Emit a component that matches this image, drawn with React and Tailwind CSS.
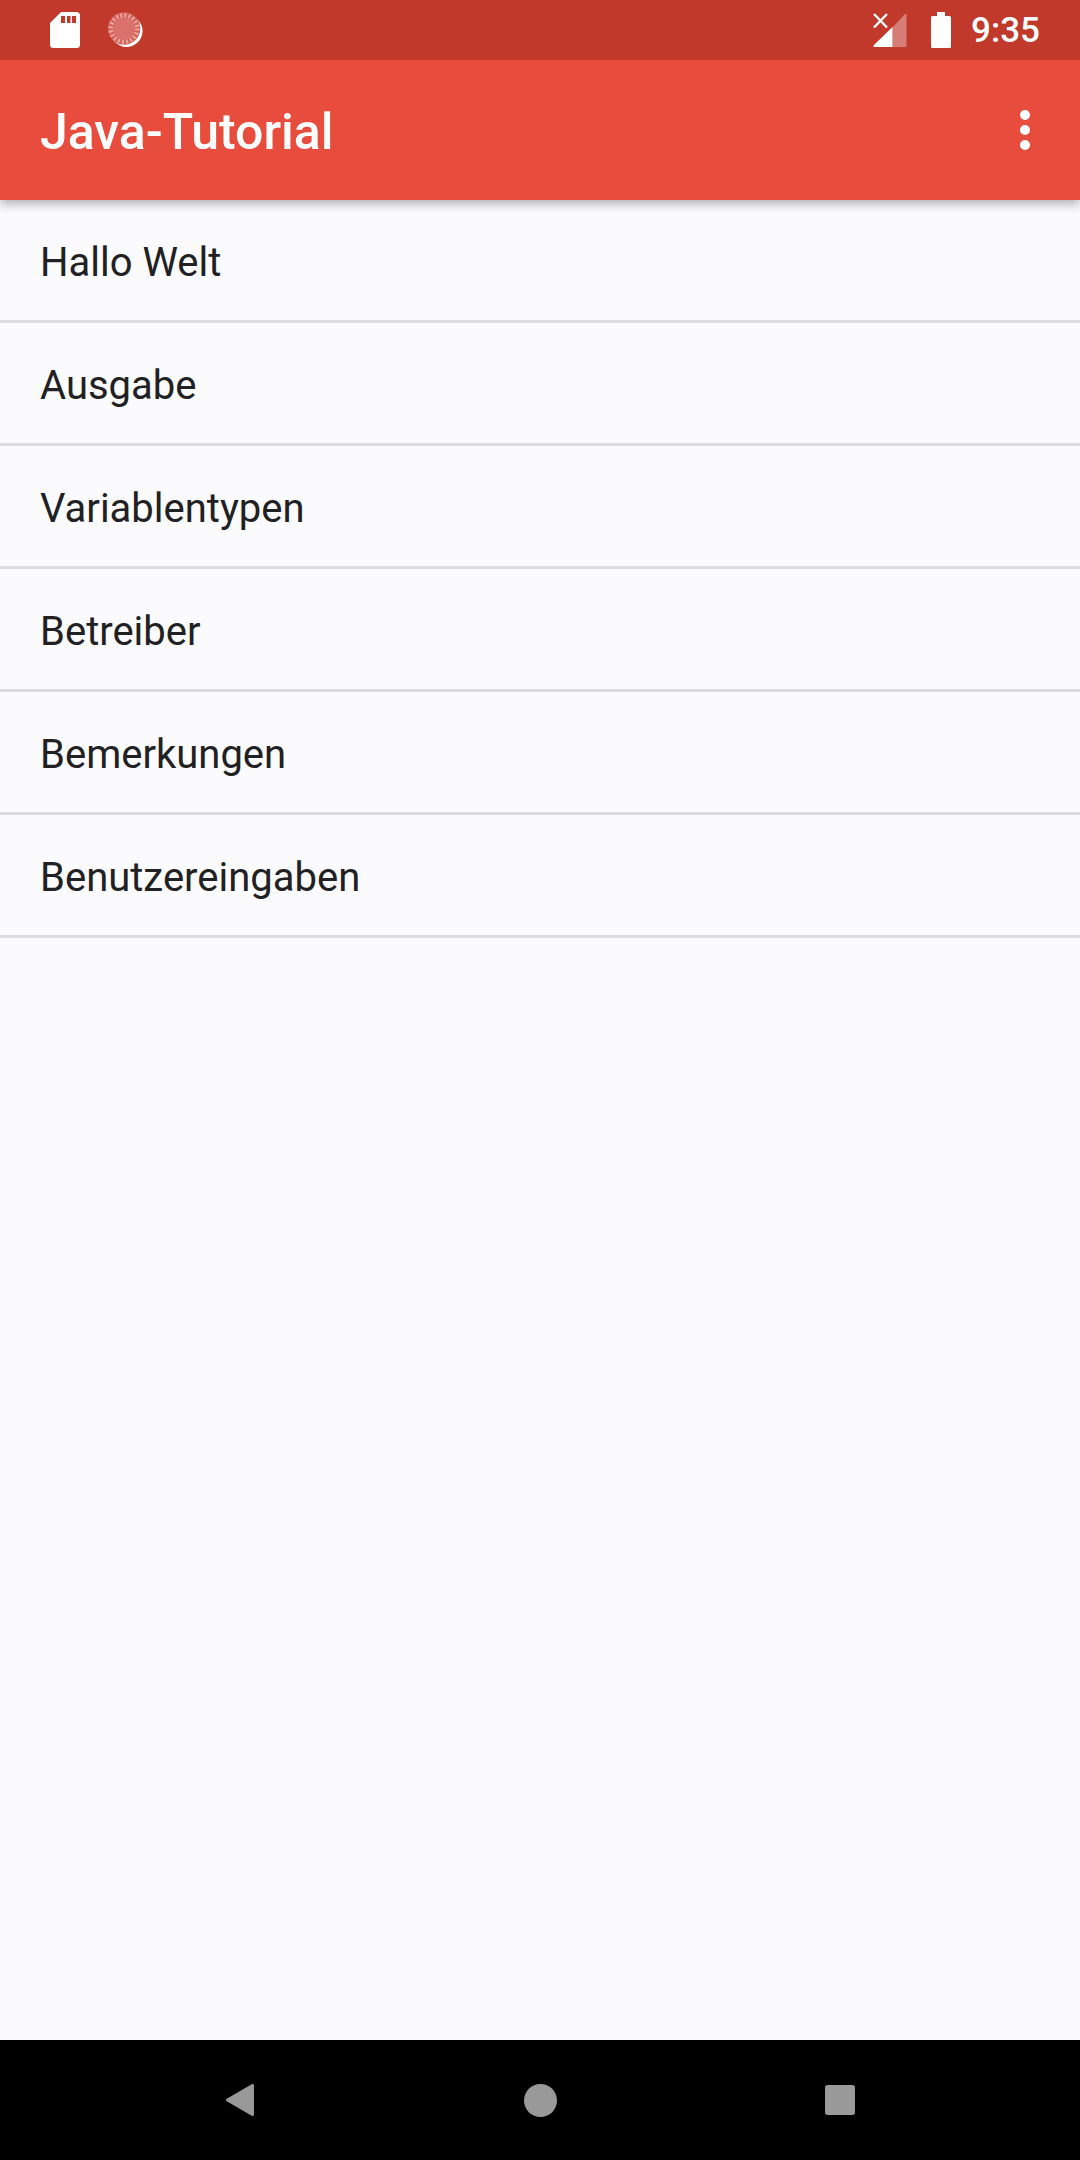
import React from "react";

const chapters = [
  "Hallo Welt",
  "Ausgabe",
  "Variablentypen",
  "Betreiber",
  "Bemerkungen",
  "Benutzereingaben",
];

function SdCardIcon() {
  return (
    <svg width="30" height="36" viewBox="0 0 30 36" aria-hidden="true">
      <path
        fill="#fff"
        fillRule="evenodd"
        d="M11 0H26.500Q30 0 30 3.500V32.500Q30 36 26.500 36H3.500Q0 36 0 32.500V11ZM11 4V11H15V4ZM17 4V11H20.500V4ZM22 4V11H26V4Z"
      />
    </svg>
  );
}

function SyncIcon() {
  return (
    <svg width="36" height="36" viewBox="0 0 36 36" aria-hidden="true">
      <circle cx="18.500" cy="19" r="16" fill="#fff" />
      <circle cx="16" cy="16.500" r="16.300" fill="#d2625a" />
      <circle
        cx="16"
        cy="16.500"
        r="13.200"
        fill="none"
        stroke="#eaa8a2"
        strokeWidth="4.500"
        strokeDasharray="1.900 2.247"
      />
      <circle cx="16" cy="16.500" r="11" fill="#d8726b" />
    </svg>
  );
}

function SignalIcon() {
  return (
    <svg width="34" height="35" viewBox="0 0 34 35" aria-hidden="true">
      <path d="M33.500 1V32.500Q33.500 34 32 34H19.500V14.500L32 1Q33.500 0 33.500 1Z" fill="#fff" fillOpacity="0.35" />
      <path d="M19.500 14V34H1.500Q-0.500 33.500 1 32Z" fill="#fff" />
      <path d="M1 1L14 14.500M14 1L1 14.500" stroke="#fff" strokeWidth="2.400" />
    </svg>
  );
}

function BatteryIcon() {
  return (
    <svg width="20" height="36" viewBox="0 0 20 36" aria-hidden="true">
      <path
        fill="#fff"
        d="M6 0H14V4H18.500Q20 4 20 5.500V34.500Q20 36 18.500 36H1.500Q0 36 0 34.500V5.500Q0 4 1.500 4H6Z"
      />
    </svg>
  );
}

function StatusBar() {
  return (
    <div className="relative z-10 flex h-[60px] items-center justify-between bg-[#c0392b] pl-[50px] pr-10">
      <div className="flex items-center gap-7">
        <SdCardIcon />
        <SyncIcon />
      </div>
      <div className="flex items-center">
        <SignalIcon />
        <div className="ml-6 mr-5">
          <BatteryIcon />
        </div>
        <span className="pt-[2px] text-[35px] leading-[40px] font-medium text-white">9:35</span>
      </div>
    </div>
  );
}

function AppBar() {
  return (
    <header className="relative flex h-[140px] items-center justify-between bg-[#e84c3d] pl-10 pr-[35px] shadow-[0_4px_10px_rgba(0,0,0,0.3)]">
      <h1 className="pt-1 text-[50px] leading-[60px] font-medium text-white">Java-Tutorial</h1>
      <button type="button" aria-label="Weitere Optionen" className="flex size-10 items-center justify-center">
        <svg width="10" height="40" viewBox="0 0 10 40" fill="#fff" aria-hidden="true">
          <circle cx="5" cy="5" r="5" />
          <circle cx="5" cy="20" r="5" />
          <circle cx="5" cy="35" r="5" />
        </svg>
      </button>
    </header>
  );
}

function NavBar() {
  return (
    <nav className="flex h-[120px] bg-black px-[90px]">
      <button type="button" aria-label="Zurück" className="flex flex-1 items-center justify-center">
        <svg width="28" height="32" viewBox="0 0 28 32" aria-hidden="true">
          <path d="M26.500 1.500V30.500L1.500 16Z" fill="#999" stroke="#999" strokeWidth="3" strokeLinejoin="round" />
        </svg>
      </button>
      <button type="button" aria-label="Startseite" className="flex flex-1 items-center justify-center">
        <span className="size-[33px] rounded-full bg-[#999]" />
      </button>
      <button type="button" aria-label="Übersicht" className="flex flex-1 items-center justify-center">
        <span className="size-[30px] rounded-[3px] bg-[#999]" />
      </button>
    </nav>
  );
}

export default function App() {
  return (
    <div className="flex min-h-screen flex-col bg-[#fbfbfd] font-['Roboto',sans-serif]">
      <StatusBar />
      <AppBar />
      <main className="flex-1">
        <ul>
          {chapters.map((chapter) => (
            <li key={chapter} className="border-b-3 border-[#dcdcde]">
              <a href="#" className="block px-10 pt-[39px] pb-[33px] text-[40px] leading-[48px] text-[#212124]">
                {chapter}
              </a>
            </li>
          ))}
        </ul>
      </main>
      <NavBar />
    </div>
  );
}
